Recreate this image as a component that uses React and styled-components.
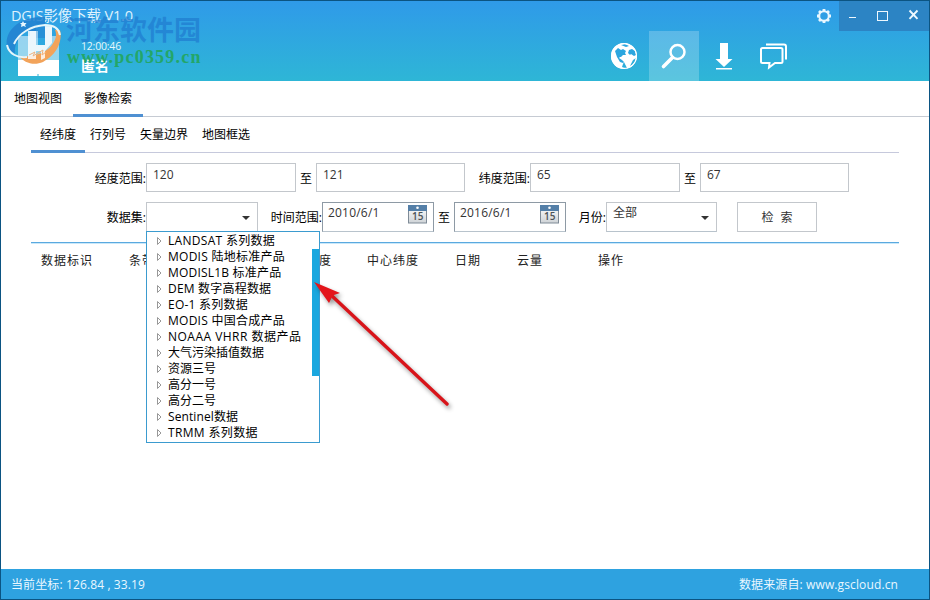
import React, { useState } from 'react';
import styled, { createGlobalStyle } from 'styled-components';

const GlobalStyle = createGlobalStyle`
    * {
        box-sizing: border-box;
    }
    body {
        margin: 0;
        background: #fff;
        overflow: hidden;
    }
    input, button {
        font-family: inherit;
    }
`;

const Window = styled.div`
    position: relative;
    display: flex;
    flex-direction: column;
    width: 930px;
    height: 600px;
    border: 1px solid #0b5482;
    background: #fff;
    color: #000;
    font-family: 'Open Sans', 'Noto Sans CJK SC', sans-serif;
    font-size: 12px;
    line-height: 16px;
    white-space: nowrap;
`;

const Header = styled.header`
    position: relative;
    display: flex;
    justify-content: space-between;
    flex: none;
    height: 80px;
    background: linear-gradient(#2f9ae9, #2eb6d6);
    color: #fff;
`;

const Brand = styled.div`
    display: flex;
    flex-direction: column;
    padding: 5px 0 0 10px;
`;

const Title = styled.div`
    height: 20px;
    font-size: 14.5px;
    line-height: 20px;
    letter-spacing: -0.15px;
    color: #dff2fd;
`;

const User = styled.div`
    padding: 12px 0 0 70px;
`;

const Clock = styled.div`
    font-size: 10.5px;
    line-height: 16px;
    letter-spacing: -0.2px;
    color: #e6f8fc;
`;

const UserName = styled.div`
    margin-top: 2px;
    font-size: 14px;
    line-height: 20px;
    font-weight: bold;
`;

const LogoIcon = styled.svg`
    position: absolute;
    left: 4px;
    top: 11px;
`;

const SiteMark = styled.div`
    position: absolute;
    left: 65px;
    top: 13px;
    color: rgba(32, 124, 208, 0.72);
    font-size: 27px;
    line-height: 31px;
    font-weight: bold;
`;

const SiteUrl = styled.div`
    position: absolute;
    left: 66px;
    top: 46px;
    color: #23a669;
    font-family: 'Liberation Serif', serif;
    font-size: 18px;
    line-height: 20px;
    font-weight: bold;
    letter-spacing: 1.2px;
`;

const HeaderRight = styled.div`
    display: flex;
    flex-direction: column;
    width: 330px;
`;

const WindowBar = styled.div`
    display: flex;
    justify-content: flex-end;
    height: 30px;
`;

const SettingIcon = styled.svg`
    margin: 7px 7px 0 0;
`;

const WindowButtons = styled.div`
    display: grid;
    grid-template-columns: repeat(3, 30px);
    width: 90px;
    background: #2c84c4;
`;

const ToolBar = styled.div`
    display: flex;
`;

const ToolButton = styled.button`
    width: 50px;
    height: 50px;
    padding: 0;
    border: 0;
    background: ${props => (props.$active ? 'rgba(255, 255, 255, 0.22)' : 'transparent')};
    svg {
        display: block;
    }
`;

const Tabs = styled.nav`
    display: flex;
    flex: none;
    height: 36px;
    padding-left: 2px;
    border-bottom: 1px solid #c6cbd3;
`;

const Tab = styled.div`
    width: 70px;
    height: 36px;
    padding: 10px 0 0 11px;
    border-bottom: 3px solid ${props => (props.$active ? '#4f90d2' : 'transparent')};
`;

const Panel = styled.main`
    flex: 1;
    padding: 0 30px;
`;

const SubTabs = styled.nav`
    display: flex;
    height: 36px;
    border-bottom: 1px solid #c6c9dc;
`;

const SubTab = styled.div`
    height: 36px;
    margin-right: -4px;
    padding: 10px 9px 0;
    border-bottom: 3px solid ${props => (props.$active ? '#4f90d2' : 'transparent')};
`;

const FormRow = styled.div`
    display: flex;
    height: ${props => props.$height}px;
    margin-top: 10px;
`;

const Label = styled.label`
    width: ${props => props.$width}px;
    padding-top: 8px;
    text-align: right;
`;

const To = styled.span`
    width: 20px;
    padding-top: 8px;
    text-align: center;
`;

const Input = styled.input`
    width: ${props => props.$width}px;
    height: 29px;
    padding: 0 6px 7px;
    border: 1px solid #c3c7cc;
    outline: 0;
    background: #fff;
    color: #333;
    font-size: 12px;
`;

const Field = styled.div`
    display: flex;
    justify-content: space-between;
    width: ${props => props.$width}px;
    height: 30px;
    padding: 2px ${props => (props.$date ? 5 : 6)}px 0;
    border: 1px solid ${props => (props.$date ? '#8e9aa5' : '#c3c7cc')};
    border-bottom-color: #b8c3cc;
    color: #333;
    letter-spacing: ${props => (props.$date ? 0.2 : 0)}px;
`;

const Caret = styled.span`
    width: 0;
    height: 0;
    margin: 11px 1px 0 0;
    border: 4px solid transparent;
    border-top-color: #333;
    border-bottom: 0;
`;

const SearchButton = styled.button`
    width: 80px;
    height: 30px;
    margin-left: 20px;
    padding: 0 0 1px;
    border: 1px solid #c3c7cc;
    background: #fff;
    color: #333;
    font-size: 12px;
    word-spacing: 4px;
`;

const TableHead = styled.div`
    display: grid;
    grid-template-columns: 88px 190px 48px 88px 62px 81px 1fr;
    margin-top: 10px;
    padding: 10px 0 0 10px;
    border-top: 1px solid #5aa9df;
    box-shadow: inset 0 1px #c9e8fa;
    color: #222;
    letter-spacing: 1px;
`;

const DropDown = styled.div`
    position: absolute;
    left: 145px;
    top: 230px;
    width: 174px;
    height: 212px;
    padding: 1px 0 0 8px;
    border: 1px solid #3b9bcf;
    background: #fff;
`;

const TreeItem = styled.div`
    display: flex;
    align-items: center;
    gap: 5px;
    height: 16px;
    letter-spacing: ${props => props.$spacing}px;
`;

const ScrollThumb = styled.div`
    position: absolute;
    right: 0;
    top: 17px;
    width: 7px;
    height: 127px;
    background: #1aa7df;
`;

const Pointer = styled.svg`
    position: absolute;
    left: 304px;
    top: 270px;
    filter: drop-shadow(2px 3px 2px rgba(0, 0, 0, 0.4));
`;

const StatusBar = styled.footer`
    display: flex;
    justify-content: space-between;
    flex: none;
    height: 30px;
    padding: 8px 31px 0 10px;
    background: #2ea2e0;
    color: #e9f7ff;
    letter-spacing: 0.12px;
`;

const Logo = () => (
    <LogoIcon width="60" height="66" viewBox="0 0 60 66">
        <path d="M2 35C-1 19 14 4 40 5V12H31V19H22C14 25 9 32 10 41C6 40 3 38 2 35Z" fill="#2382d0" fillOpacity=".88" />
        <path d="M31 10H40V26H31Z" fill="#2382d0" fillOpacity=".6" />
        <path d="M13 24H25V19H33V33H40V15H47V24H54V64H13Z" fill="#fff" fillOpacity=".5" />
        <path d="M15 48H54V64H34V62H32V64H13V48Z" fill="#fff" />
        <path d="M50 18H55C58 30 51 43 38 50C29 54 19 51 14 44C25 46 40 42 47 33C51 27 52 23 50 18Z" fill="#f2a35a" />
        <path d="M23 19H31V33H40V14H47V31L40 39V46L36 48V39H31V47H23Z" fill="#fff" fillOpacity=".82" />
        <path d="M2 33C4 42 12 46 22 45M9 32C14 21 26 14 40 13C49 13 54 17 55 23" fill="none" stroke="#e5f6fb" strokeWidth="2" />
        <path d="M24 43L30 40L28 44L38 38L37 43L41 40" fill="none" stroke="#edb17d" />
        <path d="M18 9L19 11L21.5 11L20 13L21 15L18.5 14L16 15L16.5 12.5L15 11L17 11Z" fill="#e8f8ff" />
    </LogoIcon>
);

const GlobeIcon = () => (
    <svg width="50" height="50" viewBox="0 0 50 50">
        <circle cx="25" cy="25" r="13" fill="#fff" />
        <path d="M16 20L19 17L22 19L24 18L27 20L26 22L27 24L24 24L22 26L21 26L20 27L23 29L25 31L24 32L21 31L18 26Z" fill="#2ca6df" />
        <path d="M25 31L28 37L27 38L23 36L24 33ZM34 29L37 27L36 31L33 34L31 35Z" fill="#2eaedb" />
        <path d="M30 19L33 18L36 20L37 24L35 25L32 23L31 24L29 22Z" fill="#2ca6df" />
        <path d="M22 14L26 13L30 15L27 16Z" fill="#2ca6df" />
        <circle cx="25" cy="25" r="12.4" fill="none" stroke="#fff" strokeWidth="1.1" />
    </svg>
);

const SearchIcon = () => (
    <svg width="50" height="50" viewBox="0 0 50 50" fill="none" stroke="#fff">
        <circle cx="28.5" cy="21" r="7" strokeWidth="2.5" />
        <path d="M23.5 26.5L14.5 35.5" strokeWidth="3.6" strokeLinecap="round" />
    </svg>
);

const DownloadIcon = () => (
    <svg width="50" height="50" viewBox="0 0 50 50" fill="#fff">
        <path d="M21 12H29V28H33.5L25 36L16.5 28H21Z" />
        <path d="M17 37H33V38.5H17Z" />
    </svg>
);

const ChatIcon = () => (
    <svg width="50" height="50" viewBox="0 0 50 50" fill="none" stroke="#fff" strokeWidth="2">
        <path d="M13.5 17H32Q33.5 17 33.5 18.5V30.5Q33.5 32 32 32H26L20 36.5L20.5 32H13.5Q12 32 12 30.5V18.5Q12 17 13.5 17Z" />
        <path d="M17 13.5H35Q37 13.5 37 15.5V28.5" />
    </svg>
);

const CalendarIcon = () => (
    <svg width="20" height="20" viewBox="0 0 20 20">
        <defs>
            <linearGradient id="paper" x2="0" y2="1">
                <stop stopColor="#fff" />
                <stop offset="1" stopColor="#cfd3d7" />
            </linearGradient>
        </defs>
        <rect x=".5" y=".5" width="18" height="17.5" fill="url(#paper)" stroke="#7f8b97" />
        <rect x="0" y="0" width="19" height="6" fill="#547fa8" />
        <circle cx="9.5" cy="2.8" r="1.3" fill="#fff" />
        <text x="9.8" y="15.3" textAnchor="middle" fontSize="10" fontWeight="600" fontFamily="Open Sans, sans-serif" fill="#4d5358">15</text>
    </svg>
);

const TreeArrow = () => (
    <svg width="8" height="10" viewBox="0 0 8 10">
        <path d="M2.5 1.5L6 5L2.5 8.5Z" fill="#fff" stroke="#989898" />
    </svg>
);

const tools = [GlobeIcon, SearchIcon, DownloadIcon, ChatIcon];
const subTabs = ['经纬度', '行列号', '矢量边界', '地图框选'];
const columns = ['数据标识', '条带', '度', '中心纬度', '日期', '云量', '操作'];
const dataSets = [
    { name: 'LANDSAT 系列数据', spacing: 0.3 },
    { name: 'MODIS 陆地标准产品', spacing: 0.25 },
    { name: 'MODISL1B 标准产品', spacing: 0.2 },
    { name: 'DEM 数字高程数据', spacing: 0.2 },
    { name: 'EO-1 系列数据', spacing: 0.25 },
    { name: 'MODIS 中国合成产品', spacing: 0.25 },
    { name: 'NOAAA VHRR 数据产品', spacing: 0.48 },
    { name: '大气污染插值数据', spacing: 0 },
    { name: '资源三号', spacing: 0 },
    { name: '高分一号', spacing: 0 },
    { name: '高分二号', spacing: 0 },
    { name: 'Sentinel数据', spacing: 0.1 },
    { name: 'TRMM 系列数据', spacing: 0.35 },
];

const App = () => {
    const [tool, setTool] = useState(1);
    const [range, setRange] = useState({ west: '120', east: '121', south: '65', north: '67' });

    const onChangeRange = (e) => {
        setRange({ ...range, [e.target.name]: e.target.value });
    };

    return (
        <>
            <GlobalStyle />
            <Window>
                <Header>
                    <Brand>
                        <Title>DGIS影像下载 V1.0</Title>
                        <User>
                            <Clock>12:00:46</Clock>
                            <UserName>匿名</UserName>
                        </User>
                    </Brand>
                    <Logo />
                    <SiteMark>河东软件园</SiteMark>
                    <SiteUrl>www.pc0359.cn</SiteUrl>
                    <HeaderRight>
                        <WindowBar>
                            <SettingIcon width="16" height="16" viewBox="0 0 16 16" fill="none" stroke="#e8f7ff">
                                <circle cx="8" cy="8" r="4.8" strokeWidth="2.1" />
                                <path d="M8 1V3M8 13V15M1 8H3M13 8H15M3 3L4.5 4.5M11.5 11.5L13 13M13 3L11.5 4.5M3 13L4.5 11.5" strokeWidth="2.8" />
                            </SettingIcon>
                            <WindowButtons>
                                <svg width="30" height="30" stroke="#eef8ff"><path d="M10 16.5H17" /></svg>
                                <svg width="30" height="30" stroke="#eef8ff" fill="none"><rect x="8.5" y="10.5" width="10" height="9" /></svg>
                                <svg width="30" height="30" stroke="#eef8ff" strokeWidth="1.9"><path d="M10.5 9.5L18.5 17.8M18.5 9.5L10.5 17.8" /></svg>
                            </WindowButtons>
                        </WindowBar>
                        <ToolBar>
                            {tools.map((Icon, i) => (
                                <ToolButton key={i} $active={tool === i} onClick={() => setTool(i)}>
                                    <Icon />
                                </ToolButton>
                            ))}
                        </ToolBar>
                    </HeaderRight>
                </Header>
                <Tabs>
                    <Tab>地图视图</Tab>
                    <Tab $active>影像检索</Tab>
                </Tabs>
                <Panel>
                    <SubTabs>
                        {subTabs.map((name, i) => (
                            <SubTab key={name} $active={i === 0}>{name}</SubTab>
                        ))}
                    </SubTabs>
                    <FormRow $height={29}>
                        <Label $width={115}>经度范围:</Label>
                        <Input $width={150} name="west" value={range.west} onChange={onChangeRange} />
                        <To>至</To>
                        <Input $width={149} name="east" value={range.east} onChange={onChangeRange} />
                        <Label $width={65}>纬度范围:</Label>
                        <Input $width={150} name="south" value={range.south} onChange={onChangeRange} />
                        <To>至</To>
                        <Input $width={149} name="north" value={range.north} onChange={onChangeRange} />
                    </FormRow>
                    <FormRow $height={30}>
                        <Label $width={115}>数据集:</Label>
                        <Field $width={112}><span /><Caret /></Field>
                        <Label $width={64}>时间范围:</Label>
                        <Field $width={112} $date>2010/6/1<CalendarIcon /></Field>
                        <To>至</To>
                        <Field $width={112} $date>2016/6/1<CalendarIcon /></Field>
                        <Label $width={40}>月份:</Label>
                        <Field $width={111}>全部<Caret /></Field>
                        <SearchButton>检 索</SearchButton>
                    </FormRow>
                    <TableHead>
                        {columns.map(name => <span key={name}>{name}</span>)}
                    </TableHead>
                </Panel>
                <StatusBar>
                    <span>当前坐标: 126.84 , 33.19</span>
                    <span>数据来源自: www.gscloud.cn</span>
                </StatusBar>
                <DropDown>
                    {dataSets.map(({ name, spacing }) => (
                        <TreeItem key={name} $spacing={spacing}><TreeArrow />{name}</TreeItem>
                    ))}
                    <ScrollThumb />
                </DropDown>
                <Pointer width="155" height="145" viewBox="0 0 155 145">
                    <path d="M26 24L142 133" stroke="#d8141a" strokeWidth="3.4" strokeLinecap="round" />
                    <path d="M9 11L35 22L29 24L27 26L24 32Z" fill="#e3151b" />
                </Pointer>
            </Window>
        </>
    );
};

export default App;
